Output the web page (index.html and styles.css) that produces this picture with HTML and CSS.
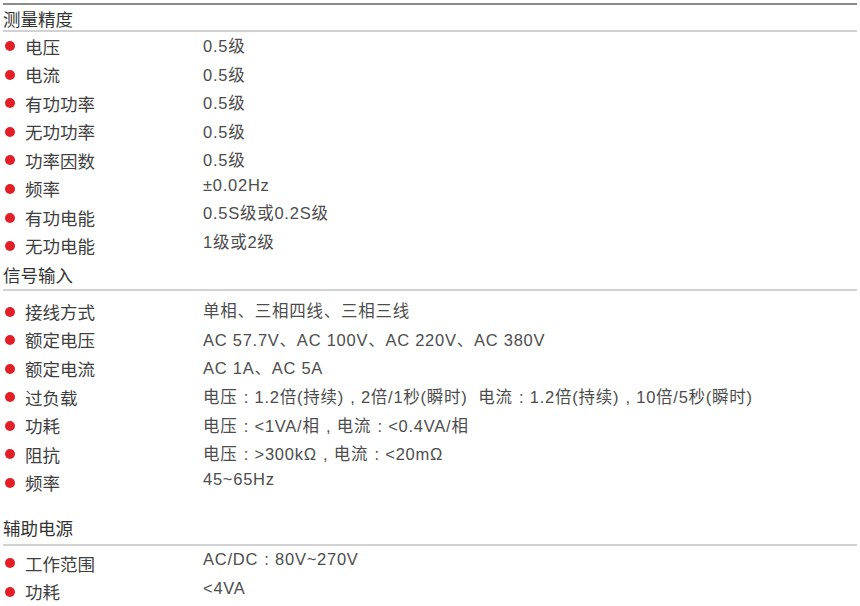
FILE: index.html
```html
<!DOCTYPE html>
<html lang="zh-CN">
<head>
    <meta charset="UTF-8">
    <meta name="viewport" content="width=device-width, initial-scale=1.0">
    <title>技术参数</title>
    <link rel="stylesheet" href="styles.css">
</head>
<body>
    <div class="specs">
        <section class="group group-first">
            <h2 class="group-title">测量精度</h2>
            <ul class="rows">
                <li class="row"><span class="label">电压</span><span class="value">0.5级</span></li>
                <li class="row"><span class="label">电流</span><span class="value">0.5级</span></li>
                <li class="row"><span class="label">有功功率</span><span class="value">0.5级</span></li>
                <li class="row"><span class="label">无功功率</span><span class="value">0.5级</span></li>
                <li class="row"><span class="label">功率因数</span><span class="value">0.5级</span></li>
                <li class="row"><span class="label">频率</span><span class="value up">±0.02Hz</span></li>
                <li class="row"><span class="label">有功电能</span><span class="value up">0.5S级或0.2S级</span></li>
                <li class="row"><span class="label">无功电能</span><span class="value up">1级或2级</span></li>
            </ul>
        </section>

        <section class="group group-second">
            <h2 class="group-title">信号输入</h2>
            <ul class="rows">
                <li class="row"><span class="label">接线方式</span><span class="value">单相、三相四线、三相三线</span></li>
                <li class="row"><span class="label">额定电压</span><span class="value">AC 57.7V、AC 100V、AC 220V、AC 380V</span></li>
                <li class="row"><span class="label">额定电流</span><span class="value">AC 1A、AC 5A</span></li>
                <li class="row"><span class="label">过负载</span><span class="value">电压<span class="punct">:</span>1.2倍(持续)<span class="punct">,</span>2倍/1秒(瞬时)&nbsp; 电流<span class="punct">:</span>1.2倍(持续)<span class="punct">,</span>10倍/5秒(瞬时)</span></li>
                <li class="row"><span class="label">功耗</span><span class="value">电压<span class="punct">:</span>&lt;1VA/相<span class="punct">,</span>电流<span class="punct">:</span>&lt;0.4VA/相</span></li>
                <li class="row"><span class="label">阻抗</span><span class="value">电压<span class="punct">:</span>&gt;300kΩ<span class="punct">,</span>电流<span class="punct">:</span>&lt;20mΩ</span></li>
                <li class="row"><span class="label">频率</span><span class="value up">45~65Hz</span></li>
            </ul>
        </section>

        <section class="group group-third">
            <h2 class="group-title">辅助电源</h2>
            <ul class="rows">
                <li class="row"><span class="label">工作范围</span><span class="value up">AC/DC<span class="punct">:</span>80V~270V</span></li>
                <li class="row"><span class="label">功耗</span><span class="value up">&lt;4VA</span></li>
            </ul>
        </section>
    </div>
</body>
</html>
```

FILE: styles.css
```css
* {
    margin: 0;
    padding: 0;
    box-sizing: border-box;
}

body {
    font-family: "Noto Sans CJK SC", "Noto Sans", sans-serif;
    background: #fff;
    color: #3a3a3a;
}

.specs {
    width: 854px;
    margin: 0 3px;
    padding-top: 3px;
}

.group-first {
    border-top: 2px solid #8c8c8c;
}

.group-title {
    font-size: 17.5px;
    font-weight: 400;
    color: #333;
    line-height: 27px;
    height: 27px;
    border-bottom: 2px solid #d2d2d2;
}

.group-second .group-title {
    height: 31px;
    line-height: 30px;
}

.group-second .rows {
    padding-top: 6px;
}

.group-third {
    margin-top: 16px;
}

.group-third .group-title {
    height: 33px;
    line-height: 30px;
}

.group-third .rows {
    padding-top: 3px;
}

.rows {
    list-style: none;
}

.row {
    display: grid;
    grid-template-columns: 200px 1fr;
    align-items: center;
    height: 28.55px;
}

.label {
    position: relative;
    padding-left: 22px;
    font-size: 17.5px;
    color: #404040;
    line-height: 1;
}

.label::before {
    content: '';
    position: absolute;
    left: 2px;
    top: 50%;
    width: 10px;
    height: 10px;
    margin-top: -5px;
    border-radius: 50%;
    background: #e41e26;
}

.value {
    font-family: "Liberation Sans", "Noto Sans CJK SC", sans-serif;
    font-size: 16.5px;
    letter-spacing: 0.75px;
    color: #4d4d4d;
    line-height: 1;
    white-space: nowrap;
}

/* full-width colon / comma, centred in its box */
.punct {
    display: inline-block;
    width: 17px;
    text-align: center;
    letter-spacing: 0;
}

.value.up {
    position: relative;
    top: -4px;
}
```
